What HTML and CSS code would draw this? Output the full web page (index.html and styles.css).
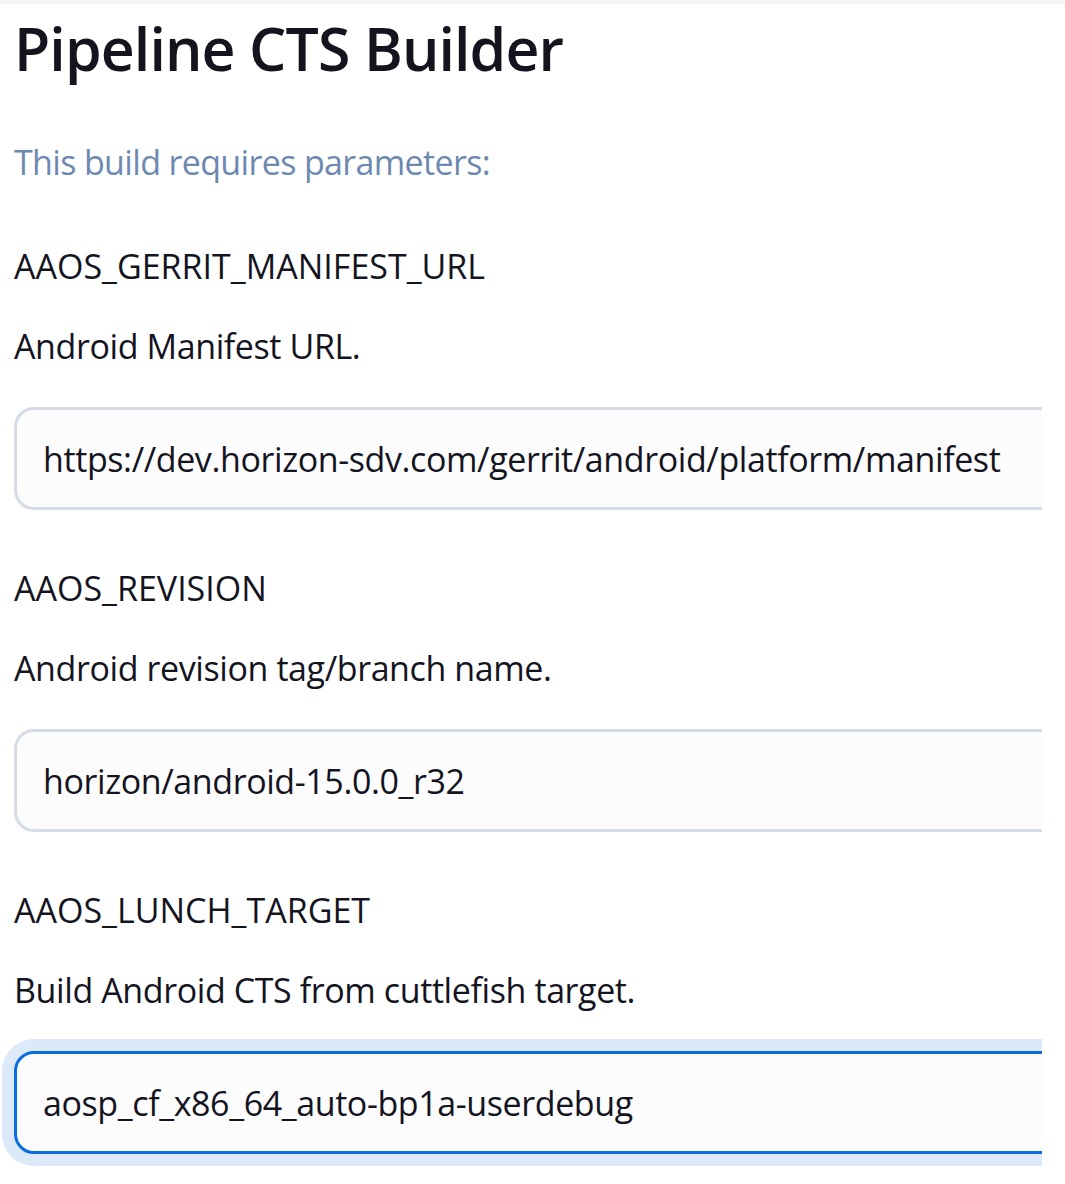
FILE: index.html
```html
<!DOCTYPE html>
<html lang="en">
<head>
<meta charset="utf-8">
<title>Pipeline CTS Builder</title>
<link rel="stylesheet" href="styles.css">
</head>
<body>
<div class="topstrip"></div>
<main class="page">
  <h1 class="title">Pipeline CTS Builder</h1>
  <p class="intro">This build requires parameters:</p>

  <div class="param">
    <div class="param-name">AAOS_GERRIT_MANIFEST_URL</div>
    <div class="param-desc">Android Manifest URL.</div>
    <input class="param-input" type="text" value="https://dev.horizon-sdv.com/gerrit/android/platform/manifest">
  </div>

  <div class="param">
    <div class="param-name">AAOS_REVISION</div>
    <div class="param-desc">Android revision tag/branch name.</div>
    <input class="param-input" type="text" value="horizon/android-15.0.0_r32">
  </div>

  <div class="param">
    <div class="param-name">AAOS_LUNCH_TARGET</div>
    <div class="param-desc">Build Android CTS from cuttlefish target.</div>
    <input class="param-input is-focused" type="text" value="aosp_cf_x86_64_auto-bp1a-userdebug">
  </div>
</main>
</body>
</html>
```

FILE: styles.css
```css
html, body {
  margin: 0;
  padding: 0;
  background: #ffffff;
}

body {
  width: 1065px;
  height: 1184px;
  overflow: hidden;
  font-family: "Open Sans", "Noto Sans", sans-serif;
  color: #14141f;
}

.topstrip {
  height: 4px;
  background: #f5f5f7;
}

.page {
  width: 1042px;
  box-sizing: border-box;
  padding: 8px 0 24px 14px;
  overflow: hidden;
}

.title {
  margin: 0;
  font-size: 59px;
  line-height: 72px;
  font-weight: 600;
  letter-spacing: -0.9px;
}

.intro {
  margin: 55px 0 0;
  font-size: 34px;
  line-height: 46px;
  letter-spacing: -0.65px;
  color: #6e89b0;
}

.param {
  display: flex;
  flex-direction: column;
  align-items: flex-start;
  margin-top: 58px;
}

.param + .param {
  margin-top: 55px;
}

.param-name,
.param-desc {
  font-size: 34px;
  line-height: 46px;
}

.param-name {
  margin-bottom: 34px;
}

.param-desc {
  margin-bottom: 38px;
  letter-spacing: -0.4px;
}

.param-input {
  box-sizing: border-box;
  width: 1100px;
  height: 103px;
  margin: 0;
  padding: 0 26px;
  border: 3px solid #d6dce6;
  border-radius: 20px;
  background: #fcfcfd;
  font-family: inherit;
  font-size: 34px;
  line-height: 46px;
  letter-spacing: -0.4px;
  color: #14141f;
  outline: none;
}

.param-input.is-focused {
  border-color: #0b6ee0;
  box-shadow: 0 0 0 12px #dbe9f9;
}
```
